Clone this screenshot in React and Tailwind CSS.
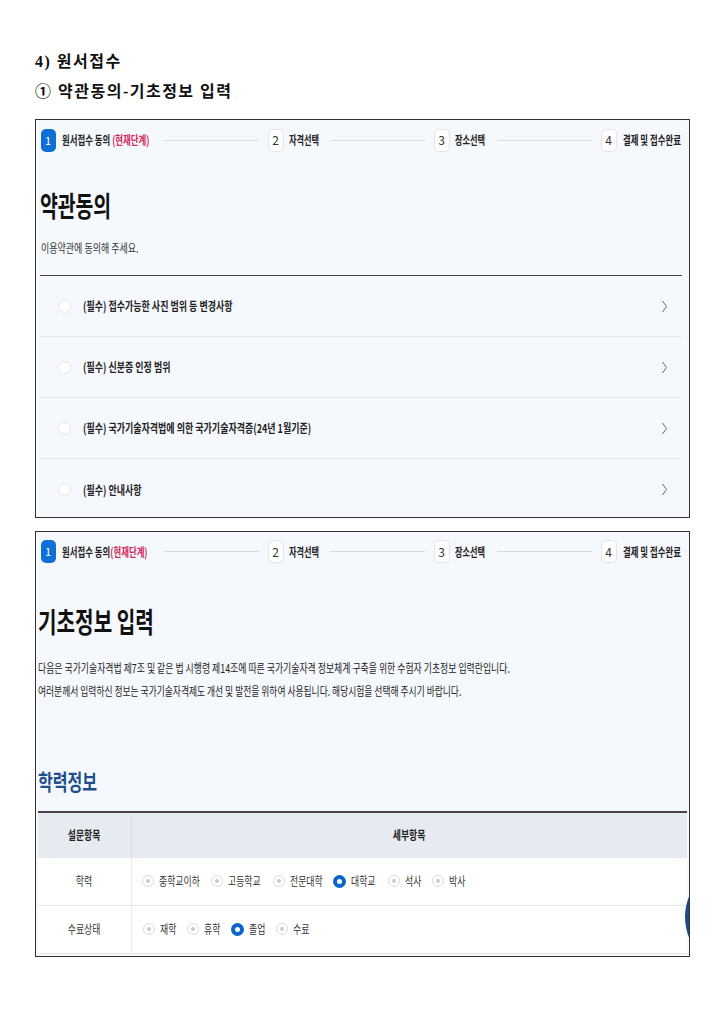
import React from 'react'

// Screenshot of a condensed Korean UI font: Noto Sans CJK squeezed with scale-x.
const KR = "font-['Noto_Sans_CJK_KR',sans-serif]"

function StepBox({ n, active }) {
  if (active) {
    return (
      <div className="flex h-[23px] w-[15px] shrink-0 items-center justify-center rounded-[5px] bg-[#0f6fd6] text-[11px] font-normal leading-none text-white">
        {n}
      </div>
    )
  }
  return (
    <div className="flex h-[23px] w-[16px] shrink-0 items-center justify-center rounded-[5px] border border-[#e1e4e9] bg-white text-[12px] font-normal leading-none text-[#333]">
      {n}
    </div>
  )
}

function StepLine() {
  return <div className="mx-[9px] h-px flex-1 bg-[#d8dce1]" />
}

function Stepper({ gap }) {
  return (
    <div className="flex h-[23px] items-center pl-[4.5px] pr-[3.5px] text-[12px] font-bold leading-none text-[#222]">
      <StepBox n="1" active />
      <div className="ml-[6px] w-[93px] shrink-0">
        <span className="inline-block origin-left scale-x-[0.7] whitespace-nowrap">
          원서접수 동의{gap ? ' ' : ''}
          <span className="text-[#d4265a]">(현재단계)</span>
        </span>
      </div>
      <StepLine />
      <StepBox n="2" />
      <div className="ml-[5px] w-[32px] shrink-0">
        <span className="inline-block origin-left scale-x-[0.68] whitespace-nowrap">자격선택</span>
      </div>
      <StepLine />
      <StepBox n="3" />
      <div className="ml-[5px] w-[33px] shrink-0">
        <span className="inline-block origin-left scale-x-[0.68] whitespace-nowrap">장소선택</span>
      </div>
      <StepLine />
      <StepBox n="4" />
      <div className="ml-[6px] w-[63px] shrink-0">
        <span className="inline-block origin-left scale-x-[0.7] whitespace-nowrap">결제 및 접수완료</span>
      </div>
    </div>
  )
}

function Chevron() {
  return (
    <svg width="7" height="13" viewBox="0 0 7 13" className="shrink-0">
      <polyline points="1.5,1 5.5,6.5 1.5,12" fill="none" stroke="#666" strokeWidth="1" />
    </svg>
  )
}

function TermRow({ text, last }) {
  return (
    <div className={`flex h-[61px] items-center ${last ? '' : 'border-b border-[#e4e8ec]'}`}>
      <div className="ml-[18px] h-[13px] w-[13px] shrink-0 rounded-full border border-[#e6e6e6] bg-white" />
      <div className="ml-[12px] flex-1 text-[12px] font-bold leading-none text-[#222]">
        <span className="inline-block origin-left scale-x-[0.75] whitespace-nowrap">{text}</span>
      </div>
      <div className="mr-[14px]">
        <Chevron />
      </div>
    </div>
  )
}

function Radio({ on }) {
  if (on) {
    return <div className="h-[13px] w-[13px] shrink-0 rounded-full border-[4px] border-[#0b66c9] bg-white" />
  }
  return (
    <div className="flex h-[12px] w-[12px] shrink-0 items-center justify-center rounded-full border border-[#dadada] bg-white">
      <div className="h-[4px] w-[4px] rounded-full bg-[#c9c9c9]" />
    </div>
  )
}

function Option({ label, on, w }) {
  return (
    <div className="flex items-center">
      <Radio on={on} />
      <div className={`ml-[5px] ${w}`}>
        <span className="inline-block origin-left scale-x-[0.74] whitespace-nowrap">{label}</span>
      </div>
    </div>
  )
}

export default function App() {
  return (
    <div className={`min-h-[1025px] w-[725px] bg-white pt-[47px] ${KR}`}>
      {/* document heading */}
      <div className="pl-[35px] font-['Liberation_Serif','Noto_Sans_CJK_KR',serif] text-[16px] font-bold leading-[30px] tracking-[1.5px] text-[#111]">
        <div>4) 원서접수</div>
        <div>① 약관동의-기초정보 입력</div>
      </div>

      {/* screenshot 1: terms agreement */}
      <div className="ml-[35px] mt-[12px] h-[399px] w-[655px] overflow-hidden border-[1.5px] border-[#333] bg-[#f5f8fc] pt-[8.5px]">
        <Stepper gap />
        <h2 className="ml-[4px] mt-[35px] h-[36px] text-[28px] font-bold leading-[36px] text-[#111]">
          <span className="inline-block origin-left scale-x-[0.69] whitespace-nowrap">약관동의</span>
        </h2>
        <p className="ml-[4.5px] mt-[17px] h-[16px] text-[12px] leading-[16px] text-[#333]">
          <span className="inline-block origin-left scale-x-[0.75] whitespace-nowrap">이용약관에 동의해 주세요.</span>
        </p>
        <div className="ml-[3.5px] mr-[7.5px] mt-[19px]">
          <div className="h-[1.5px] bg-[#454545]" />
          <TermRow text="(필수) 접수가능한 사진 범위 등 변경사항" />
          <TermRow text="(필수) 신분증 인정 범위" />
          <TermRow text="(필수) 국가기술자격법에 의한 국가기술자격증(24년 1월기준)" />
          <TermRow text="(필수) 안내사항" last />
        </div>
      </div>

      {/* screenshot 2: basic info */}
      <div className="relative ml-[35px] mt-[13px] h-[426px] w-[655px] overflow-hidden border-[1.5px] border-[#333] bg-[#f5f8fc] pt-[8px]">
        <Stepper />
        <h2 className="ml-[2px] mt-[40px] h-[36px] text-[28px] font-bold leading-[36px] text-[#111]">
          <span className="inline-block origin-left scale-x-[0.72] whitespace-nowrap">기초정보 입력</span>
        </h2>
        <div className="ml-[1.5px] mt-[17px] text-[12px] leading-[23px] text-[#222]">
          <span className="block origin-left scale-x-[0.74] whitespace-nowrap">
            다음은 국가기술자격법 제7조 및 같은 법 시행령 제14조에 따른 국가기술자격 정보체계 구축을 위한 수험자 기초정보 입력란입니다.
          </span>
          <span className="block origin-left scale-x-[0.73] whitespace-nowrap">
            여러분께서 입력하신 정보는 국가기술자격제도 개선 및 발전을 위하여 사용됩니다. 해당시험을 선택해 주시기 바랍니다.
          </span>
        </div>
        <h3 className="ml-[1.5px] mt-[63px] h-[30px] text-[22px] font-bold leading-[30px] text-[#1d4f8c]">
          <span className="inline-block origin-left scale-x-[0.73] whitespace-nowrap">학력정보</span>
        </h3>

        <div className="ml-[1.5px] mr-[2.5px] mt-[16px] text-[12px] leading-none">
          <div className="h-[1.5px] bg-[#454545]" />
          <div className="flex h-[45px] bg-[#e6eaf1] font-bold text-[#222]">
            <div className="flex w-[94px] items-center justify-center border-r border-[#d9dee6]">
              <span className="inline-block scale-x-[0.74] whitespace-nowrap">설문항목</span>
            </div>
            <div className="flex flex-1 items-center justify-center">
              <span className="inline-block scale-x-[0.74] whitespace-nowrap">세부항목</span>
            </div>
          </div>
          <div className="flex h-[48px] border-b border-[#e3e6ea] bg-white text-[#333]">
            <div className="flex w-[94px] items-center justify-center border-r border-[#e6e9ed]">
              <span className="inline-block scale-x-[0.74] whitespace-nowrap">학력</span>
            </div>
            <div className="flex flex-1 items-center gap-[8px] pl-[10px]">
              <Option label="중학교이하" w="w-[44px]" />
              <Option label="고등학교" w="w-[37px]" />
              <Option label="전문대학" w="w-[35px]" />
              <Option label="대학교" w="w-[29px]" on />
              <Option label="석사" w="w-[19px]" />
              <Option label="박사" w="w-[18px]" />
            </div>
          </div>
          <div className="flex h-[48px] border-b border-[#e3e6ea] bg-white text-[#333]">
            <div className="flex w-[94px] items-center justify-center border-r border-[#e6e9ed]">
              <span className="inline-block scale-x-[0.74] whitespace-nowrap">수료상태</span>
            </div>
            <div className="flex flex-1 items-center gap-[9px] pl-[11px]">
              <Option label="재학" w="w-[18px]" />
              <Option label="휴학" w="w-[18px]" />
              <Option label="졸업" w="w-[18px]" on />
              <Option label="수료" w="w-[18px]" />
            </div>
          </div>
        </div>

        {/* floating button, cut off by the screenshot edge */}
        <div className="absolute left-[649px] top-[330px] h-[110px] w-[110px] rounded-full bg-[#1b4a88]" />
      </div>
    </div>
  )
}
